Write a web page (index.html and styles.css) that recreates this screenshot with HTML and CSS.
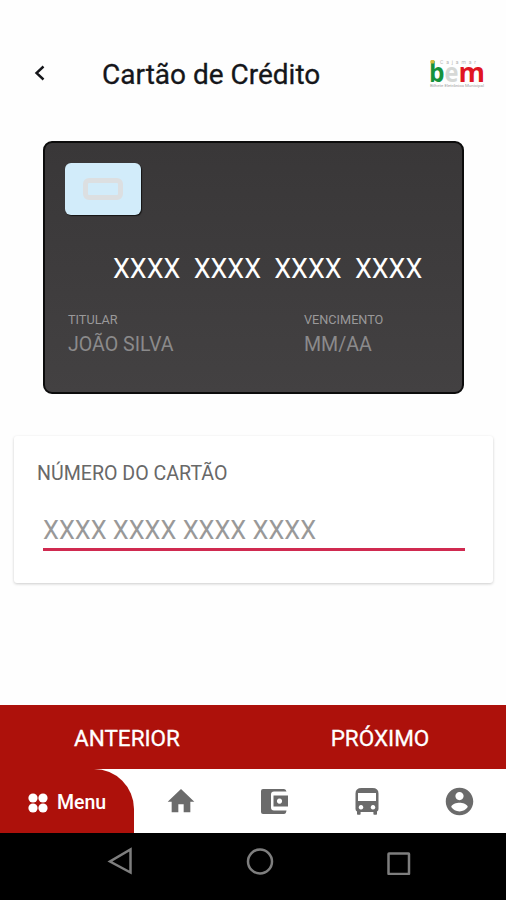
FILE: index.html
```
<!DOCTYPE html>
<html lang="pt-BR">
<head>
    <meta charset="UTF-8">
    <meta name="viewport" content="width=device-width, initial-scale=1.0">
    <title>Cartão de Crédito</title>
    <link rel="stylesheet" href="styles.css">
</head>
<body>
    <header class="header">
        <svg class="back" viewBox="0 0 12 16" width="12" height="16">
            <path d="M10.5 1.5 3.5 8l7 6.5" fill="none" stroke="#15161a" stroke-width="2.4"/>
        </svg>
        <h1 class="title">Cartão de Crédito</h1>
        <svg class="logo" viewBox="0 0 56 32" width="56" height="32">
            <text x="11" y="5" class="logo-top" textLength="36">Cajamar</text>
            <g class="logo-bem">
                <text x="0" y="22.500" fill="#15923c" textLength="15.500" lengthAdjust="spacingAndGlyphs">b</text>
                <text x="15.500" y="22.500" fill="#d6d8d6" textLength="14" lengthAdjust="spacingAndGlyphs">e</text>
                <text x="29.500" y="22.500" fill="#e01522" textLength="26.500" lengthAdjust="spacingAndGlyphs">m</text>
            </g>
            <rect x="1.500" y="1" width="4" height="3.500" rx="1" fill="#d0b93a"/>
            <text x="1" y="28" class="logo-bottom" textLength="54" lengthAdjust="spacingAndGlyphs">Bilhete Eletrônico Municipal</text>
        </svg>
    </header>

    <main class="content">
        <section class="card">
            <div class="chip"><div class="chip-inner"></div></div>
            <p class="card-number">XXXX&nbsp; XXXX&nbsp; XXXX&nbsp; XXXX</p>
            <div class="card-info">
                <div class="holder">
                    <p class="info-label">TITULAR</p>
                    <p class="info-value">JOÃO SILVA</p>
                </div>
                <div class="expiry">
                    <p class="info-label">VENCIMENTO</p>
                    <p class="info-value">MM/AA</p>
                </div>
            </div>
        </section>

        <section class="form">
            <label class="form-label" for="numero">NÚMERO DO CARTÃO</label>
            <input class="form-input" type="text" id="numero" placeholder="XXXX XXXX XXXX XXXX">
        </section>
    </main>

    <div class="steps">
        <button class="step">ANTERIOR</button>
        <button class="step">PRÓXIMO</button>
    </div>

    <nav class="tabs">
        <a class="menu">
            <svg viewBox="0 0 20 20" width="20" height="20" fill="#fff">
                <circle cx="5" cy="5" r="4.6"/>
                <circle cx="15" cy="5" r="4.6"/>
                <circle cx="5" cy="15" r="4.6"/>
                <circle cx="15" cy="15" r="4.6"/>
            </svg>
            <span>Menu</span>
        </a>
        <a class="tab">
            <svg viewBox="0 0 24 24" width="32" height="32"><path d="M10 20.500v-6h4v6h5v-8h3L12 3 2 12.500h3v8z"/></svg>
        </a>
        <a class="tab">
            <svg viewBox="0 0 28 28" width="28" height="28">
                <path d="M3 2h21q2 0 2.500 2.500H14q-3 0-3 3v13q0 3 3 3h12.500Q26 27 24 27H3q-2 0-2-2V4q0-2 2-2z"/>
                <path fill-rule="evenodd" d="M13.500 8.500H28v11H13.500zM19.500 11.500a2.600 2.600 0 1 0 .01 0z"/>
            </svg>
        </a>
        <a class="tab">
            <svg viewBox="0 0 24 28" width="24" height="28">
                <path fill-rule="evenodd" d="M0.500 6.500q0-5.500 6-5.500h11q6 0 6 5.500V22q0 1.500-1.500 2.500V27q0 .8-.8.8h-2q-.8 0-.8-.8v-2H5.600v2q0 .8-.8.8h-2Q2 27.800 2 27v-2.500Q.5 23.500.5 22zM3 6v8h18V6zM6 18a2.300 2.300 0 1 0 .01 0zM18 18a2.300 2.300 0 1 0 .01 0z"/>
            </svg>
        </a>
        <a class="tab">
            <svg viewBox="0 0 24 24" width="33" height="33"><path d="M12 2C6.480 2 2 6.480 2 12s4.480 10 10 10 10-4.480 10-10S17.520 2 12 2zm0 3c1.660 0 3 1.340 3 3s-1.340 3-3 3-3-1.340-3-3 1.340-3 3-3zm0 14.200c-2.500 0-4.710-1.280-6-3.220.03-1.990 4-3.080 6-3.080 1.990 0 5.970 1.090 6 3.080-1.290 1.940-3.500 3.220-6 3.220z"/></svg>
        </a>
    </nav>

    <!-- barra do Android -->
    <footer class="system">
        <svg viewBox="0 0 26 28" width="26" height="28"><path d="M23.500 2.500v23L3 14.500z"/></svg>
        <svg viewBox="0 0 28 28" width="28" height="28"><circle cx="14" cy="14.500" r="12"/></svg>
        <svg class="square" viewBox="0 0 24 24" width="24" height="24"><rect x="1.500" y="2.500" width="20.500" height="20.500" rx="0.500"/></svg>
    </footer>
</body>
</html>
```
FILE: styles.css
```
* {
    box-sizing: border-box;
}

body {
    margin: 0;
    height: 900px;
    display: flex;
    flex-direction: column;
    font-family: Roboto, sans-serif;
    background: #fefefe;
    overflow: hidden;
}

p, h1 {
    margin: 0;
}

.header {
    display: flex;
    align-items: center;
    height: 141px;
    padding: 0 21px 0 33px;
}

.back {
    margin: 4px 57px 0 0;
}

.title {
    flex: 1;
    margin-top: 9px;
    font-size: 28px;
    font-weight: 400;
    line-height: 32px;
    color: #15161a;
    -webkit-text-stroke: 0.3px #15161a;
    white-space: nowrap;
}

.logo {
    margin-top: 9px;
    overflow: visible;
}

.logo-bem {
    font-family: "Open Sans", sans-serif;
    font-size: 26px;
    font-weight: 700;
}

.logo-top {
    font-size: 5px;
    fill: #b5b5b5;
}

.logo-bottom {
    font-size: 4px;
    fill: #a0a0a0;
}

.content {
    flex: 1;
}

.card {
    height: 253px;
    margin: 0 42px 0 43px;
    padding: 20px 23px 0 20px;
    border: 2px solid #0c0c0c;
    border-radius: 9px;
    background: linear-gradient(#393738, #434142);
    color: #fff;
}

.chip {
    display: flex;
    align-items: center;
    justify-content: center;
    width: 76px;
    height: 52px;
    border-radius: 6px;
    background: #d2ecfa;
    box-shadow: 1px 1px 1px #151515;
}

.chip-inner {
    width: 40px;
    height: 22px;
    border: 5px solid #dcdfe1;
    border-radius: 6px;
}

.card-number {
    margin: 37px 0 0 48px;
    font-size: 26.850px;
    line-height: 34px;
    white-space: nowrap;
}

.card-info {
    display: flex;
    margin: 26px 0 0 3px;
}

.holder {
    width: 236px;
}

.info-label {
    font-size: 12.700px;
    line-height: 16px;
    color: #9a999a;
}

.info-value {
    margin-top: 5px;
    font-size: 19.600px;
    line-height: 24px;
    color: #8b8a8b;
}

.form {
    height: 147px;
    margin: 42px 13px 0 14px;
    padding: 26px 28px 0 23px;
    border-radius: 3px;
    background: #fff;
    box-shadow: 0 1px 3px rgba(0, 0, 0, 0.2);
}

.form-label {
    display: block;
    font-size: 19.600px;
    line-height: 24px;
    color: #686868;
}

.form-input {
    display: block;
    width: 422px;
    height: 42px;
    margin: 23px 0 0 5.500px;
    padding: 3px 0 0 0.500px;
    border: none;
    border-bottom: 3px solid #d02a50;
    outline: none;
    background: none;
    font-family: Roboto, sans-serif;
    font-size: 25.350px;
}

.form-input::placeholder {
    color: #999;
}

.steps {
    display: flex;
    height: 64px;
    background: #ad110b;
}

.step {
    flex: 1;
    padding: 2px 0 0 1px;
    border: none;
    background: none;
    color: #fff;
    font-family: Roboto, sans-serif;
    font-size: 22.500px;
    -webkit-text-stroke: 0.3px #fff;
}

.tabs {
    display: flex;
    height: 64px;
    background: #fff;
}

.menu {
    display: flex;
    align-items: center;
    gap: 9px;
    width: 134px;
    padding: 3px 0 0 28px;
    border-top-right-radius: 40px;
    background: #ad110b;
    color: #fff;
    font-size: 19.500px;
    font-weight: 500;
}

.tab {
    flex: 1;
    display: flex;
    align-items: center;
    justify-content: center;
    fill: #6b6b6b;
}

.system {
    display: flex;
    height: 67px;
    padding: 14px 0 0 107px;
    background: #000;
    fill: none;
    stroke: #7e7e7e;
    stroke-width: 2.500;
    gap: 113px;
}

.square {
    margin-top: 4px;
}
```
